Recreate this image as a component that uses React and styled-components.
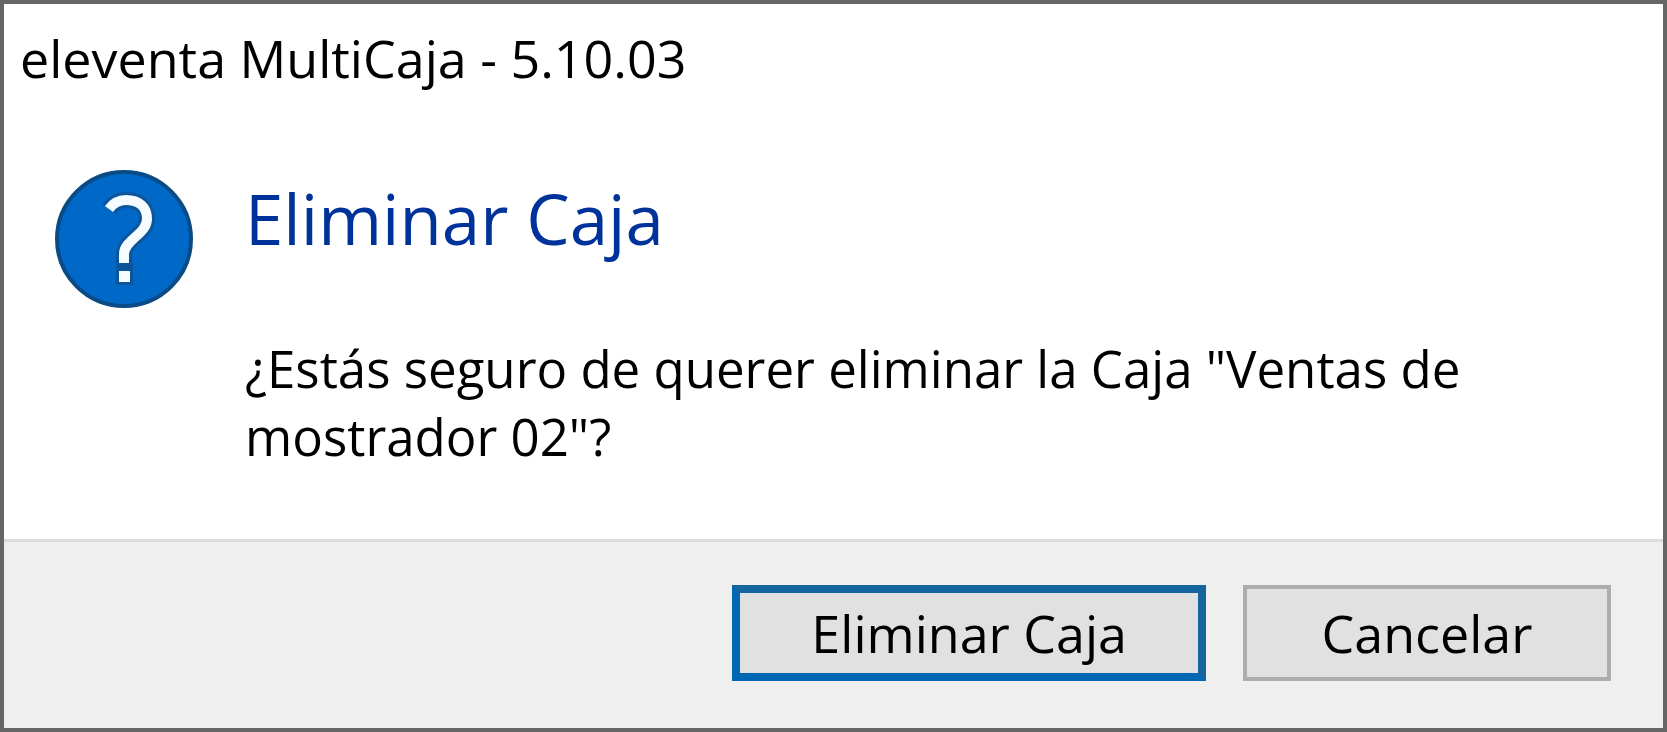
import React from 'react';
import styled, { createGlobalStyle } from 'styled-components';

const GlobalStyle = createGlobalStyle`
  * { box-sizing: border-box; }
  body {
    margin: 0;
    background: #fff;
    color: #000;
    font-family: "Segoe UI", "Open Sans", sans-serif;
  }
`;

const DialogWindow = styled.section`
  display: flex;
  flex-direction: column;
  min-height: 100vh;
  border: 4px solid #666;
  background: #fff;
`;

const TitleBar = styled.header`
  padding: 20px 16px 0;
  font-size: 52px;
  line-height: 68px;
`;

const Content = styled.div`
  display: flex;
  flex: 1;
  align-items: flex-start;
  gap: 52px;
  padding: 78px 52px 66px 51px;
`;

const QuestionIcon = styled.svg`
  flex: none;
  width: 138px;
  height: 138px;
`;

const Message = styled.div`
  flex: 1;
  min-width: 0;
`;

const Heading = styled.h1`
  margin: 0 0 68px;
  color: #003399;
  font-size: 69px;
  font-weight: 400;
  line-height: 96px;
`;

const Question = styled.p`
  margin: 0;
  font-size: 51px;
  line-height: 68px;
`;

const Footer = styled.footer`
  display: flex;
  flex-wrap: wrap;
  justify-content: flex-end;
  gap: 37px;
  padding: 43px 52px 47px;
  border-top: 3px solid #dcdcdc;
  background: #efefef;
`;

const Button = styled.button`
  min-width: 368px;
  height: 96px;
  padding: 0 71px;
  border: ${({ $primary }) => ($primary ? '8px solid' : '4px solid')};
  border-color: ${({ $primary }) => ($primary ? '#15659f #15659f #0067b5 #0067b5' : '#adadad')};
  border-radius: 0;
  background: #e1e1e1;
  color: #000;
  font-family: inherit;
  font-size: 52px;
  line-height: 68px;
`;

const hook = 'M54 39C59 32 65 30 71 30C84 30 92 37 92 49C92 64 69 70 69 84V93';

export default function App() {
  return (
    <>
      <GlobalStyle />
      <DialogWindow role="dialog" aria-labelledby="dialog-title" aria-describedby="dialog-question">
        <TitleBar id="dialog-title">eleventa MultiCaja - 5.10.03</TitleBar>
        <Content>
          <QuestionIcon viewBox="0 0 138 138" aria-hidden="true">
            <circle cx="69" cy="69" r="67" fill="#0068c6" stroke="#0a4a85" strokeWidth="4" />
            <path d={hook} fill="none" stroke="#0b559c" strokeWidth="16" />
            <path d="M61 93h17v22H61z" fill="#0b559c" />
            <path d={hook} fill="none" stroke="#f4fcff" strokeWidth="10" />
            <path d="M64 101h11v11H64z" fill="#f4fcff" />
          </QuestionIcon>
          <Message>
            <Heading>Eliminar Caja</Heading>
            <Question id="dialog-question">
              ¿Estás seguro de querer eliminar la Caja "Ventas de mostrador 02"?
            </Question>
          </Message>
        </Content>
        <Footer>
          <Button type="button" $primary>Eliminar Caja</Button>
          <Button type="button">Cancelar</Button>
        </Footer>
      </DialogWindow>
    </>
  );
}
